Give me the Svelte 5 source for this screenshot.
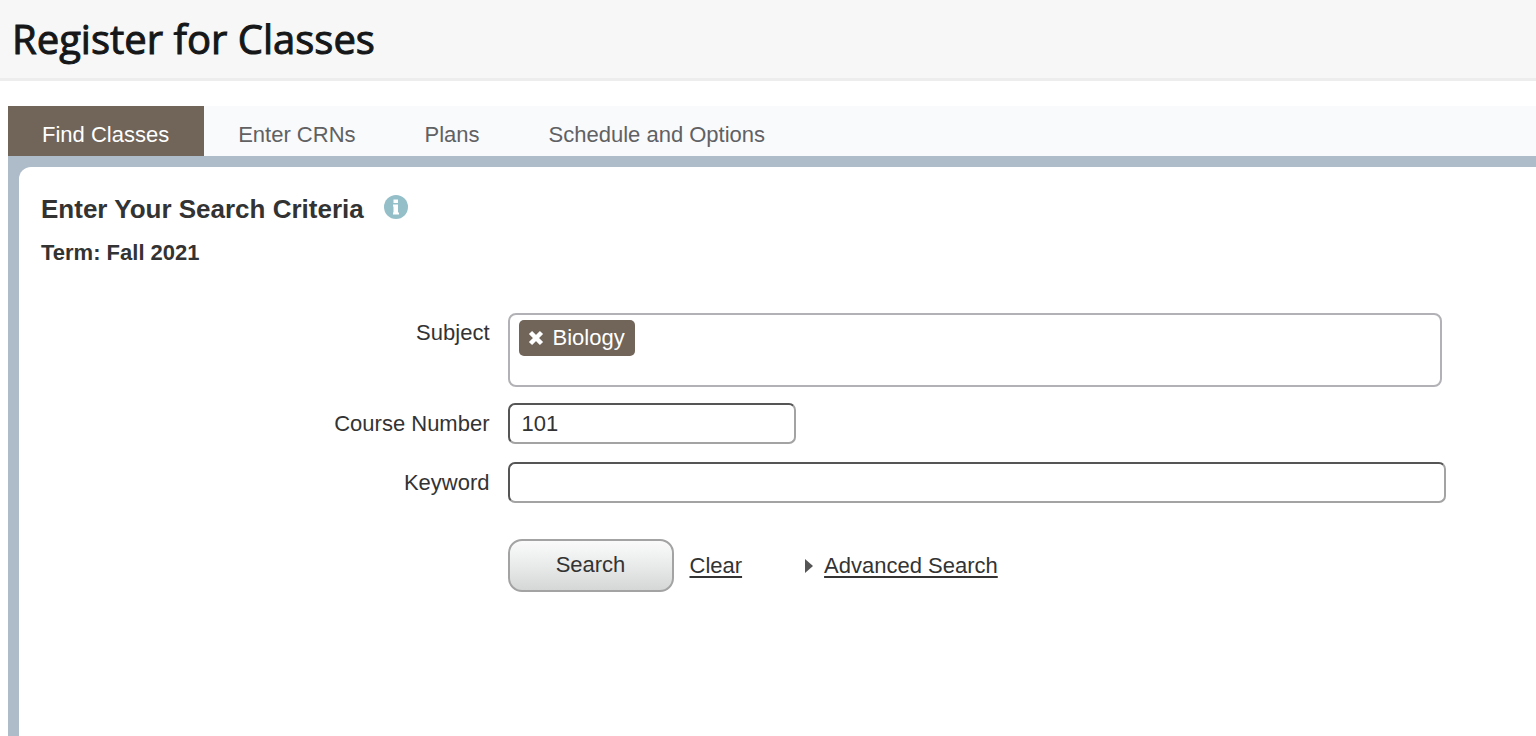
<script lang="ts">
  const tabs = ["Find Classes", "Enter CRNs", "Plans", "Schedule and Options"];

  let activeTab = $state("Find Classes");
  let subjects = $state(["Biology"]);
  let subjectText = $state("");
  let courseNumber = $state("101");
  let keyword = $state("");

  const removeSubject = (name: string) => {
    subjects = subjects.filter((subject) => subject !== name);
  };

  const clear = () => {
    subjects = [];
    subjectText = "";
    courseNumber = "";
    keyword = "";
  };
</script>

<svelte:head>
  <title>Register for Classes</title>
</svelte:head>

<div class="page">
  <header class="header">
    <h1>Register for Classes</h1>
  </header>

  <main class="main">
    <div class="tabs" role="tablist">
      {#each tabs as tab}
        <button
          class="tab"
          class:active={tab === activeTab}
          type="button"
          role="tab"
          aria-selected={tab === activeTab}
          onclick={() => (activeTab = tab)}>{tab}</button
        >
      {/each}
    </div>

    <div class="frame">
      <section class="panel">
        <div class="heading">
          <h2>Enter Your Search Criteria</h2>
          <button class="info" type="button" aria-label="Search help">
            <svg width="24" height="24" viewBox="0 0 24 24">
              <circle cx="12" cy="12" r="12" fill="#94bfc9" />
              <path d="M9.500 4.500h4.500v3.500h-4.500zM9 9.500h5v8h1v2h-6v-2h.5v-6h-.5z" fill="#fff" />
            </svg>
          </button>
        </div>
        <p class="term">Term: Fall 2021</p>

        <form class="form" onsubmit={(e) => e.preventDefault()}>
          <div class="row subject-row">
            <label for="subject">Subject</label>
            <div class="subject-box">
              {#each subjects as subject}
                <span class="chip">
                  <button type="button" aria-label="Remove {subject}" onclick={() => removeSubject(subject)}>
                    <svg width="16" height="16" viewBox="0 0 16 16">
                      <path d="M2.500 2.500l11 11M13.500 2.500l-11 11" stroke="#fff" stroke-width="4.500" />
                    </svg>
                  </button>
                  {subject}
                </span>
              {/each}
              <input id="subject" type="text" bind:value={subjectText} />
            </div>
          </div>

          <div class="row number-row">
            <label for="course-number">Course Number</label>
            <input class="field short" id="course-number" type="text" bind:value={courseNumber} />
          </div>

          <div class="row">
            <label for="keyword">Keyword</label>
            <input class="field" id="keyword" type="text" bind:value={keyword} />
          </div>

          <div class="actions">
            <button class="search" type="submit">Search</button>
            <button class="clear" type="button" onclick={clear}>Clear</button>
            <a class="advanced" href="#advanced">
              <svg width="8" height="14" viewBox="0 0 8 14">
                <path d="M0 0l8 7-8 7z" fill="#555" />
              </svg>
              <span>Advanced Search</span>
            </a>
          </div>
        </form>
      </section>
    </div>
  </main>
</div>

<style>
  :global(body) {
    margin: 0;
    background: #fff;
  }

  .page {
    min-height: 100vh;
    display: flex;
    flex-direction: column;
    font-family: "Liberation Sans", Arial, sans-serif;
    font-size: 22px;
    line-height: 26px;
    color: #333;
  }

  button,
  input {
    font: inherit;
    color: inherit;
    box-sizing: border-box;
  }

  button {
    cursor: pointer;
  }

  .header {
    padding: 12px;
    background: #f7f7f7;
    border-bottom: 3px solid #ededed;
  }

  h1 {
    margin: 0;
    font-family: "Open Sans", sans-serif;
    font-size: 40px;
    line-height: 54px;
    font-weight: 500;
    color: #151719;
    -webkit-text-stroke: 1px #151719;
  }

  .main {
    flex: 1;
    display: flex;
    flex-direction: column;
    padding: 25px 0 0 8px;
  }

  .tabs {
    display: flex;
    background: #f9fafc;
  }

  .tab {
    padding: 16px 35px 8px 34px;
    border: 0;
    background: none;
    color: #5f6163;
  }

  .tab.active {
    background: #716459;
    color: #fff;
  }

  .frame {
    flex: 1;
    display: flex;
    padding: 11px 0 0 11px;
    background: #aebbc9;
  }

  .panel {
    flex: 1;
    padding: 26px 0 0 22px;
    border-top-left-radius: 12px;
    background: #fff;
  }

  .heading {
    display: flex;
    align-items: flex-start;
    gap: 20px;
  }

  h2 {
    margin: 0;
    font-size: 26px;
    line-height: 32px;
    font-weight: 700;
  }

  .info {
    display: flex;
    padding: 2px 0;
    border: 0;
    background: none;
  }

  .term {
    margin: 15px 0 0;
    font-weight: 700;
  }

  .form {
    --label-width: calc((100vw - 41px) * 0.3);
    margin-top: 47px;
  }

  .row {
    display: flex;
    align-items: center;
    gap: 18px;
    margin-bottom: 16px;
    padding-right: 90px;
  }

  .row label {
    flex: none;
    width: var(--label-width);
    text-align: right;
  }

  .subject-row {
    align-items: flex-start;
    padding-right: 94px;
  }

  .subject-row label {
    padding-top: 7px;
  }

  .number-row {
    margin-bottom: 18px;
  }

  .subject-box {
    flex: 1;
    display: flex;
    align-items: flex-start;
    box-sizing: border-box;
    min-height: 74px;
    padding: 5px 9px;
    border: 2px solid #b2b2b6;
    border-radius: 8px;
  }

  .subject-box input {
    flex: 1;
    min-width: 0;
    height: 36px;
    border: 0;
    outline: 0;
    background: none;
  }

  .chip {
    display: flex;
    align-items: center;
    gap: 9px;
    padding: 5px 10px 5px 9px;
    border-radius: 5px;
    background: #716459;
    color: #fff;
  }

  .chip button {
    display: flex;
    padding: 0;
    border: 0;
    background: none;
  }

  .field {
    flex: 1;
    min-width: 0;
    height: 41px;
    padding: 0 12px;
    border: 2px solid #a3a3a3;
    border-top-color: #555;
    border-left-color: #555;
    border-radius: 7px;
    background: #fff;
  }

  .short {
    flex: 0 1 288px;
  }

  .actions {
    display: flex;
    align-items: center;
    margin-top: 36px;
    padding-left: calc(var(--label-width) + 18px);
  }

  .search {
    width: 166px;
    height: 53px;
    padding-bottom: 3px;
    border: 2px solid #a3a3a3;
    border-radius: 14px;
    background: linear-gradient(#fafafa, #e9ebeb 50%, #d5d7d7);
  }

  .clear {
    margin-left: 16px;
    padding: 0;
    border: 0;
    background: none;
    text-decoration: underline;
    text-decoration-thickness: 2px;
    text-underline-offset: 3px;
  }

  .advanced {
    display: flex;
    align-items: center;
    gap: 11px;
    margin-left: 63px;
    color: inherit;
    text-decoration: none;
  }

  .advanced span {
    text-decoration: underline;
    text-decoration-thickness: 2px;
    text-underline-offset: 3px;
  }
</style>
